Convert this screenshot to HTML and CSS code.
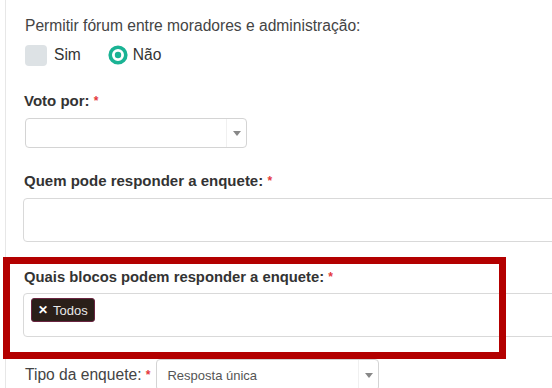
FILE: index.html
```html
<!DOCTYPE html>
<html lang="pt-BR">
<head>
    <meta charset="UTF-8">
    <title>Nova enquete</title>
    <link rel="stylesheet" href="styles.css">
</head>
<body>
    <div class="form-panel">
        <div class="form-group first">
            <div class="plain-label">Permitir fórum entre moradores e administração:</div>
            <div class="choice-row">
                <label class="choice">
                    <span class="check-box"></span>
                    <span>Sim</span>
                </label>
                <label class="choice">
                    <svg class="radio-on" width="20" height="20" viewBox="0 0 20 20">
                        <circle cx="10" cy="10" r="7.8" fill="#fff" stroke="#1ab394" stroke-width="3.6"/>
                        <circle cx="10" cy="10" r="3.2" fill="#1ab394"/>
                    </svg>
                    <span>Não</span>
                </label>
            </div>
        </div>

        <div class="form-group">
            <div class="field-label">Voto por: <span class="req">*</span></div>
            <div class="select-box small">
                <span class="select-text"></span>
                <span class="select-arrow"></span>
            </div>
        </div>

        <div class="form-group before-mark">
            <div class="field-label">Quem pode responder a enquete: <span class="req">*</span></div>
            <div class="multi-input"></div>
        </div>

        <div class="form-group highlighted">
            <div class="field-label">Quais blocos podem responder a enquete: <span class="req">*</span></div>
            <div class="multi-input">
                <span class="tag"><span class="tag-x">✕</span> Todos</span>
            </div>
        </div>

        <div class="inline-group">
            <span class="plain-label">Tipo da enquete: <span class="req">*</span></span>
            <div class="select-box wide">
                <span class="select-text">Resposta única</span>
                <span class="select-arrow"></span>
            </div>
        </div>
    </div>
</body>
</html>
```

FILE: styles.css
```css
html, body {
    margin: 0;
    overflow: hidden;
    background: #fff;
}

body {
    font-family: "Liberation Sans", Arial, sans-serif;
    font-size: 14px;
    color: #333;
}

.form-panel {
    margin-left: 5px;
    border-left: 1px solid #e7e7e7;
    padding: 16px 0 40px 17px;
    width: 620px;
}

.form-group {
    margin-bottom: 23px;
}

.form-group.first {
    margin-bottom: 25px;
}

.form-group.before-mark {
    margin-bottom: 25px;
}

.plain-label {
    font-size: 15.6px;
    line-height: 20px;
    color: #444;
    padding-left: 2px;
}

.field-label {
    font-size: 15px;
    font-weight: bold;
    line-height: 20px;
    color: #333;
    margin-bottom: 7px;
    padding-left: 1px;
}

.highlighted .field-label {
    font-size: 14.8px;
    margin-bottom: 6px;
}

.req {
    color: #e4393c;
    font-size: 12px;
    font-weight: bold;
    vertical-align: top;
}

.choice-row {
    display: flex;
    gap: 27px;
    margin-top: 8px;
    padding-left: 2px;
}

.choice {
    display: flex;
    align-items: center;
    gap: 7px;
    color: #333;
    font-size: 15.6px;
    line-height: 22px;
}

.check-box {
    width: 22px;
    height: 21px;
    border-radius: 4px;
    background: #dde2e5;
}

.radio-on {
    display: block;
    margin-right: -2px;
}

.select-box {
    display: flex;
    align-items: center;
    border: 1px solid #d4d4d4;
    border-radius: 4px;
    background: #fff;
    box-sizing: border-box;
}

.select-box.small {
    width: 222px;
    height: 30px;
    margin-left: 2px;
}

.select-box.wide {
    width: 223px;
    height: 32px;
}

.select-text {
    flex: 1;
    padding-left: 10px;
    font-size: 13px;
    color: #555;
}

.select-arrow {
    width: 19px;
    height: 100%;
    border-left: 1px solid #f0f0f0;
    display: flex;
    align-items: center;
    justify-content: center;
}

.select-arrow::after {
    content: "";
    border-left: 4px solid transparent;
    border-right: 4px solid transparent;
    border-top: 5px solid #888;
}

.multi-input {
    height: 44px;
    border: 1px solid #d9d9d9;
    border-radius: 4px;
    box-sizing: border-box;
    padding: 4px 7px;
}

.tag {
    display: inline-flex;
    align-items: center;
    gap: 5px;
    height: 24px;
    padding: 0 6px;
    box-sizing: border-box;
    background: #2a1f19;
    border: 1px solid #6a2440;
    border-radius: 3px;
    color: #e8e8e8;
    font-size: 13px;
}

.tag-x {
    font-weight: bold;
    color: #fff;
    font-size: 12px;
}

.highlighted {
    position: relative;
    margin-bottom: 22px;
}

/* red annotation frame over the group */
.highlighted::after {
    content: "";
    position: absolute;
    left: -20px;
    top: -10px;
    width: 503px;
    height: 102px;
    border: 7px solid #b30000;
    box-sizing: border-box;
    pointer-events: none;
}

.inline-group {
    display: flex;
    align-items: center;
    gap: 6px;
}
```
